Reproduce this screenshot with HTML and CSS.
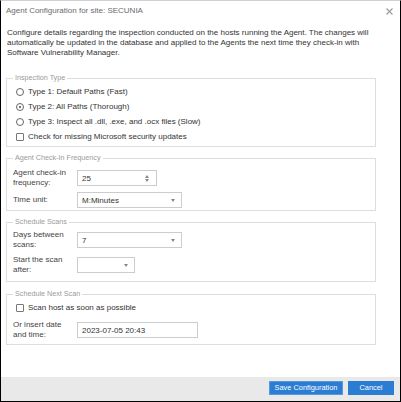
FILE: index.html
```html
<!DOCTYPE html>
<html>
<head>
<meta charset="utf-8">
<link rel="stylesheet" href="styles.css">
</head>
<body>
<div class="dialog">
  <div class="header">
    <span class="title">Agent Configuration for site: SECUNIA</span>
    <svg class="close" width="7" height="7" viewBox="0 0 7 7"><path d="M0.5 0.5L6.5 6.5M6.5 0.5L0.5 6.5" stroke="#9a9a9a" stroke-width="1.1" fill="none"/></svg>
  </div>
  <div class="content">
    <p class="intro">Configure details regarding the inspection conducted on the hosts running the Agent. The changes will automatically be updated in the database and applied to the Agents the next time they check-in with Software Vulnerability Manager.</p>

    <fieldset class="group group-inspection">
      <legend>Inspection Type</legend>
      <label class="opt"><input type="radio" name="itype" class="radio"><span>Type 1: Default Paths (Fast)</span></label>
      <label class="opt"><input type="radio" name="itype" class="radio" checked><span>Type 2: All Paths (Thorough)</span></label>
      <label class="opt"><input type="radio" name="itype" class="radio"><span>Type 3: Inspect all .dll, .exe, and .ocx files (Slow)</span></label>
      <label class="opt"><input type="checkbox" class="check"><span>Check for missing Microsoft security updates</span></label>
    </fieldset>

    <fieldset class="group group-checkin">
      <legend>Agent Check-In Frequency</legend>
      <div class="row row-tall">
        <span class="lbl">Agent check-in frequency:</span>
        <div class="field field-spin"><span>25</span><span class="spin"></span></div>
      </div>
      <div class="row row-gap">
        <span class="lbl">Time unit:</span>
        <div class="field field-unit"><span>M:Minutes</span><span class="caret"></span></div>
      </div>
    </fieldset>

    <fieldset class="group group-scans">
      <legend>Schedule Scans</legend>
      <div class="row row-tall">
        <span class="lbl">Days between scans:</span>
        <div class="field field-days"><span>7</span><span class="caret"></span></div>
      </div>
      <div class="row row-tall row-gap5">
        <span class="lbl">Start the scan after:</span>
        <div class="field field-after"><span></span><span class="caret"></span></div>
      </div>
    </fieldset>

    <fieldset class="group group-next">
      <legend>Schedule Next Scan</legend>
      <label class="opt"><input type="checkbox" class="check"><span>Scan host as soon as possible</span></label>
      <div class="row row-tall row-gap5">
        <span class="lbl">Or insert date and time:</span>
        <div class="field field-date"><span>2023-07-05 20:43</span></div>
      </div>
    </fieldset>
  </div>
  <div class="footer">
    <button class="btn btn-save">Save Configuration</button>
    <button class="btn btn-cancel">Cancel</button>
  </div>
</div>
</body>
</html>
```

FILE: styles.css
```css
html, body {
  margin: 0;
  padding: 0;
  background: #fff;
}
body {
  font-family: "Liberation Sans", Arial, sans-serif;
  font-size: 8px;
  color: #333;
}
.dialog {
  width: 401px;
  height: 402px;
  box-sizing: border-box;
  border: 1px solid #000;
  border-top-color: #d0d0d0;
  display: flex;
  flex-direction: column;
  background: #fff;
}
.header {
  height: 20px;
  line-height: 20px;
  padding: 0 7px 0 5px;
  display: flex;
  justify-content: space-between;
  align-items: center;
}
.title {
  color: #6b6b6b;
}
.close {
  display: block;
}
.content {
  flex: 1;
  padding: 0 24px 0 5px;
}
.intro {
  margin: 7px 0 15px 1px;
  line-height: 10px;
  color: #333;
}
.group {
  margin: 0 0 6px 0;
  border: 1px solid #ddd;
  padding: 0 6px;
  min-width: 0;
}
.group legend {
  color: #9a9a9a;
  font-size: 7.2px;
  padding: 0 2px;
  line-height: 10px;
}
.group-inspection { padding-top: 1px; padding-bottom: 2px; }
.group-checkin { padding-top: 5px; padding-bottom: 2px; }
.group-scans { padding-top: 3px; padding-bottom: 6px; margin-bottom: 7px; }
.group-next { padding-top: 1px; padding-bottom: 4px; }

.opt {
  display: flex;
  align-items: center;
  height: 15px;
  color: #333;
}
.radio, .check {
  appearance: none;
  -webkit-appearance: none;
  margin: 0 4px 0 3px;
  background: #fff;
  flex: none;
  box-sizing: border-box;
}
.radio {
  border: 1px solid #666;
  border-radius: 50%;
  width: 8px;
  height: 8px;
  position: relative;
}
.radio:checked::after {
  content: "";
  position: absolute;
  left: 2px;
  top: 2px;
  width: 2px;
  height: 2px;
  border-radius: 50%;
  background: #444;
}
.check {
  border: 1px solid #777;
  border-radius: 1px;
  width: 8px;
  height: 8px;
}
.row {
  display: grid;
  grid-template-columns: 64px auto;
  align-items: center;
  height: 16px;
}
.row-tall {
  height: 20px;
}
.row-gap {
  margin-top: 4px;
}
.row-gap5 {
  margin-top: 5px;
}
.lbl {
  color: #444;
  line-height: 10px;
  width: 60px;
}
.field {
  box-sizing: border-box;
  height: 16px;
  border: 1px solid #ccc;
  background: #fff;
  display: flex;
  align-items: center;
  justify-content: space-between;
  padding: 0 6px 0 4px;
  color: #333;
}
.field-spin { width: 80px; }
.field-unit { width: 105px; }
.field-days { width: 105px; }
.field-after { width: 58px; }
.field-date { width: 121px; }
.caret {
  width: 0;
  height: 0;
  border-left: 2.5px solid transparent;
  border-right: 2.5px solid transparent;
  border-top: 3px solid #888;
}
.spin {
  position: relative;
  width: 5px;
  height: 7px;
}
.spin::before, .spin::after {
  content: "";
  position: absolute;
  left: 0;
  width: 0;
  height: 0;
  border-left: 2.5px solid transparent;
  border-right: 2.5px solid transparent;
}
.spin::before {
  top: 0;
  border-bottom: 3px solid #888;
}
.spin::after {
  bottom: 0;
  border-top: 3px solid #888;
}
.footer {
  height: 24px;
  box-sizing: border-box;
  background: #e9e9e9;
  display: flex;
  justify-content: flex-end;
  align-items: flex-start;
  gap: 5px;
  padding: 4px 6px 0 6px;
}
.btn {
  font-family: "Liberation Sans", Arial, sans-serif;
  font-size: 7.4px;
  height: 14px;
  margin: 0;
  background: #2b7cd3;
  color: #fff;
  border: 1px solid #5797dc;
  border-radius: 0;
  line-height: 12px;
  padding: 0;
}
.btn-save { width: 74px; }
.btn-cancel { width: 46px; border-color: #2b7cd3; }
```
